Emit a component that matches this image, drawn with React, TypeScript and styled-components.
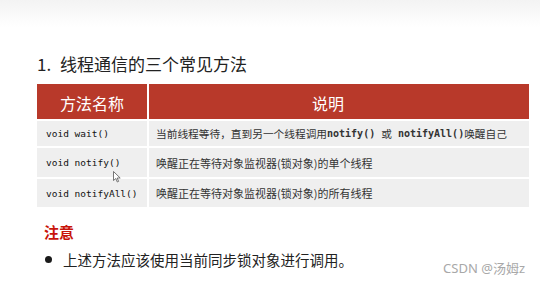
import React from 'react';
import styled, { createGlobalStyle } from 'styled-components';

const GlobalStyle = createGlobalStyle`
    html, body {
        margin: 0;
        padding: 0;
        background: #ffffff;
    }
    body {
        font-family: "Noto Sans", "Noto Sans CJK SC", sans-serif;
    }
`

const Page = styled.div`
    position: relative;
    width: 540px;
    height: 281px;
    overflow: hidden;
    background: #ffffff;
`

const TopBand = styled.div`
    height: 27px;
    background: linear-gradient(#f3f3f3, #ffffff);
`

const Content = styled.div`
    padding: 0 11px 0 37px;
`

const Title = styled.h1`
    margin: 26px 0 0;
    display: flex;
    align-items: center;
    height: 20px;
    font-family: "Noto Sans CJK SC", sans-serif;
    font-size: 17px;
    font-weight: 400;
    color: #222;
`

const TitleNum = styled.span`
    width: 23px;
`

const Table = styled.div`
    margin-top: 11px;
    display: grid;
    grid-template-columns: 110px 1fr;
    grid-template-rows: 35px 25px 29px 28px;
    column-gap: 2px;
    row-gap: 2px;
`

const HeadCell = styled.div<{ $shift?: number }>`
    background: #b8392a;
    color: #ffffff;
    display: flex;
    align-items: center;
    justify-content: center;
    padding-top: 3px;
    padding-right: ${p => (p.$shift || 0)}px;
    font-family: "Noto Sans CJK SC", sans-serif;
    font-size: 16px;
`

const MethodCell = styled.div`
    background: #efefef;
    display: flex;
    align-items: center;
    padding-left: 9px;
    font-family: "DejaVu Sans Mono", "Liberation Mono", monospace;
    font-size: 9.5px;
    color: #111;
    white-space: nowrap;
`

const DescCell = styled.div<{ $size?: number }>`
    background: #efefef;
    display: flex;
    align-items: center;
    padding-left: 7px;
    font-family: "Noto Sans CJK SC", sans-serif;
    font-size: ${p => p.$size || 11}px;
    color: #333;
    white-space: pre;
`

const Code = styled.span`
    font-family: "DejaVu Sans Mono", "Liberation Mono", monospace;
    font-size: 10px;
    font-weight: 700;
    color: #333;
    white-space: pre;
`

const Note = styled.div`
    margin-top: 15px;
    padding-left: 7px;
`

const NoteTitle = styled.div`
    height: 20px;
    line-height: 20px;
    font-family: "Noto Sans CJK SC", sans-serif;
    font-size: 15px;
    font-weight: 700;
    color: #c8140a;
`

const Bullet = styled.div`
    margin-top: 7px;
    height: 20px;
    display: flex;
    align-items: center;
    gap: 11px;
    font-family: "Noto Sans CJK SC", sans-serif;
    font-size: 14.5px;
    color: #222;
`

const Dot = styled.span`
    width: 7px;
    height: 7px;
    border-radius: 50%;
    background: #1a1a1a;
    margin-left: 1px;
`

const Watermark = styled.div`
    position: absolute;
    right: 15px;
    top: 258px;
    font-family: "Noto Sans", "Noto Sans CJK SC", sans-serif;
    font-size: 13px;
    color: #a8a8a8;
`

const Cursor = styled.svg`
    position: absolute;
    left: 113px;
    top: 171px;
`

const rows = [
    { name: 'void notify()', desc: '唤醒正在等待对象监视器(锁对象)的单个线程' },
    { name: 'void notifyAll()', desc: '唤醒正在等待对象监视器(锁对象)的所有线程' },
]

export default function App() {
    return (
        <Page>
            <GlobalStyle />
            <TopBand />
            <Content>
                <Title><TitleNum>1.</TitleNum>线程通信的三个常见方法</Title>
                <Table>
                    <HeadCell>方法名称</HeadCell>
                    <HeadCell $shift={22}>说明</HeadCell>
                    <MethodCell>void wait()</MethodCell>
                    <DescCell $size={10.7}>当前线程等待，直到另一个线程调用<Code>notify() </Code>或<Code> notifyAll()</Code>唤醒自己</DescCell>
                    {rows.map(r => (
                        <React.Fragment key={r.name}>
                            <MethodCell>{r.name}</MethodCell>
                            <DescCell>{r.desc}</DescCell>
                        </React.Fragment>
                    ))}
                </Table>
                <Note>
                    <NoteTitle>注意</NoteTitle>
                    <Bullet><Dot />上述方法应该使用当前同步锁对象进行调用。</Bullet>
                </Note>
            </Content>
            <Watermark>CSDN @汤姆z</Watermark>
            <Cursor width="8" height="12" viewBox="0 0 8 12">
                <path d="M0.5 0.5 L0.5 9.5 L2.8 7.5 L4.3 11 L5.6 10.4 L4.2 7 L7.2 7 Z" fill="#fff" stroke="#555" strokeWidth="0.8" />
            </Cursor>
        </Page>
    );
}
